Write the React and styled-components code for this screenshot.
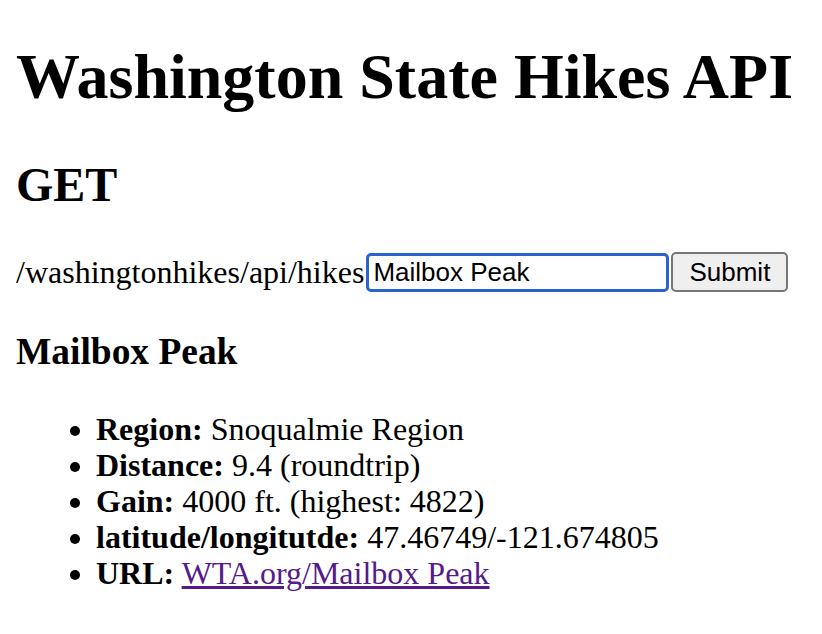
import React, { useState } from 'react';
import styled, { createGlobalStyle } from 'styled-components';

const GlobalStyle = createGlobalStyle`
  body {
    margin: 16px;
    font-family: "Liberation Serif", "Times New Roman", serif;
    font-size: 32px;
    color: #000;
    background: #fff;
  }
`;

const Title = styled.h1`
  font-size: 64px;
  font-weight: bold;
  margin: 24px 0 43px;
  white-space: nowrap;
`;

const Method = styled.h2`
  font-size: 48px;
  font-weight: bold;
  margin: 40px 0;
`;

const SearchRow = styled.form`
  display: flex;
  align-items: center;
  margin: 0;
`;

const Path = styled.span`
  font-size: 32px;
`;

const SearchInput = styled.input`
  box-sizing: border-box;
  width: 303px;
  height: 39px;
  margin: 0 0 0 2px;
  padding: 0 4px;
  border: 3px solid #2a63c9;
  border-radius: 5px;
  font-family: "Liberation Sans", Arial, sans-serif;
  font-size: 26px;
  color: #000;
  outline: none;
`;

const SubmitButton = styled.button`
  box-sizing: border-box;
  width: 117px;
  height: 40px;
  margin-left: 2px;
  padding: 0 10px;
  background: #efefef;
  border: 2px solid #767676;
  border-radius: 5px;
  font-family: "Liberation Sans", Arial, sans-serif;
  font-size: 26px;
  color: #000;
`;

const HikeName = styled.h3`
  font-size: 37.44px;
  font-weight: bold;
  margin: 38px 0;
`;

const Details = styled.ul`
  margin: 0;
  padding-left: 80px;
`;

const Item = styled.li`
  line-height: 36px;
`;

const Link = styled.a`
  color: #551a8b;
  text-decoration: underline;
`;

export default function App() {
  const [query, setQuery] = useState('Mailbox Peak');
  return (
    <>
      <GlobalStyle />
      <Title>Washington State Hikes API</Title>
      <Method>GET</Method>
      <SearchRow onSubmit={(e) => e.preventDefault()}>
        <Path>/washingtonhikes/api/hikes</Path>
        <SearchInput value={query} onChange={(e) => setQuery(e.target.value)} />
        <SubmitButton type="submit">Submit</SubmitButton>
      </SearchRow>
      <HikeName>Mailbox Peak</HikeName>
      <Details>
        <Item><b>Region:</b> Snoqualmie Region</Item>
        <Item><b>Distance:</b> 9.4 (roundtrip)</Item>
        <Item><b>Gain:</b> 4000 ft. (highest: 4822)</Item>
        <Item><b>latitude/longitutde:</b> 47.46749/-121.674805</Item>
        <Item><b>URL:</b> <Link href="#">WTA.org/Mailbox Peak</Link></Item>
      </Details>
    </>
  );
}
